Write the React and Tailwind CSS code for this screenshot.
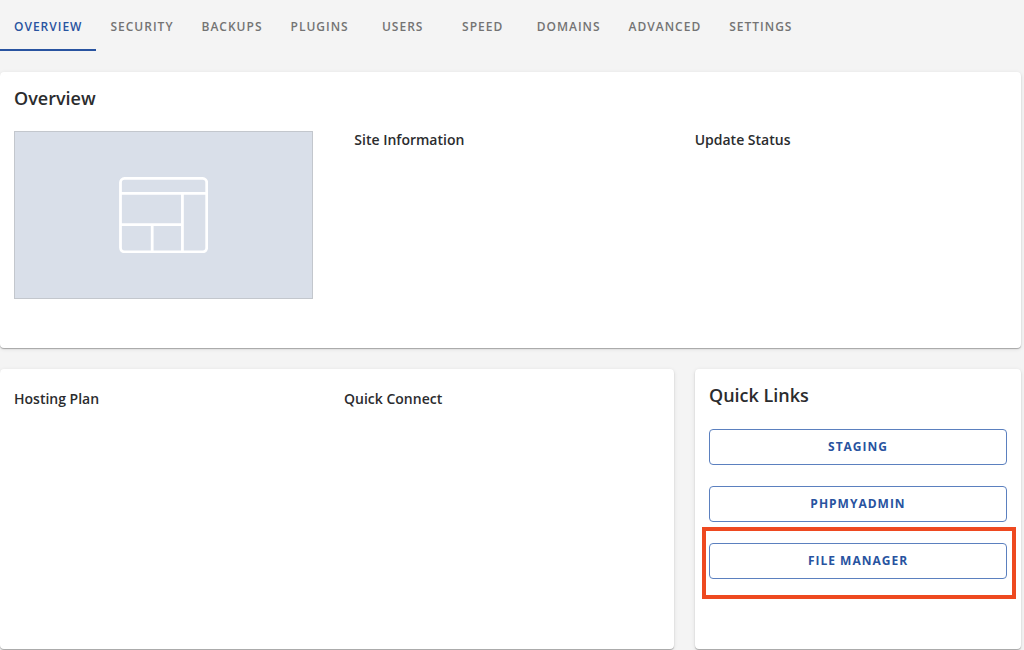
import React, { useState } from "react";

const tabs = [
  "Overview",
  "Security",
  "Backups",
  "Plugins",
  "Users",
  "Speed",
  "Domains",
  "Advanced",
  "Settings",
];

const quickLinks = [
  { label: "Staging" },
  { label: "phpMyAdmin" },
  { label: "File Manager", highlighted: true },
];

const Card = ({ className = "", children }) => (
  <section
    className={`rounded bg-white shadow-[0_1px_1px_rgba(0,0,0,0.28),0_1px_4px_rgba(0,0,0,0.1)] ${className}`}
  >
    {children}
  </section>
);

const SitePlaceholder = () => (
  <div className="flex aspect-[299/168] items-center justify-center border border-[#c3c7cd] bg-[#d9dfe9]">
    <svg
      className="w-[30%]"
      viewBox="0 0 90 77"
      fill="none"
      stroke="#fff"
      strokeWidth="2.8"
      aria-hidden="true"
    >
      <rect x="1.5" y="1.5" width="87" height="74" rx="4" />
      <path d="M1.5 16.5h87M64 16.5v59M1.5 48H64M33.5 48v27.5" />
    </svg>
  </div>
);

const App = () => {
  const [active, setActive] = useState("Overview");

  return (
    <div className="min-h-screen bg-[#f4f4f4] font-['Open_Sans',sans-serif] text-[#2b2c2e]">
      {/* Tabs */}
      <nav className="flex">
        {tabs.map((tab) => (
          <button
            key={tab}
            type="button"
            onClick={() => setActive(tab)}
            className={`min-w-20 border-b-2 px-3.5 pt-[17px] pb-3 text-xs leading-5 font-semibold tracking-[1px] uppercase ${
              active === tab
                ? "border-[#2853a0] text-[#2853a0]"
                : "border-transparent text-[#737373]"
            }`}
          >
            {tab}
          </button>
        ))}
      </nav>

      <main className="mt-[21px] mr-[3px] flex flex-col gap-[21px]">
        {/* Site overview */}
        <Card className="pt-3.5 pb-[49px]">
          <h1 className="px-3.5 text-lg leading-6 font-semibold">Overview</h1>
          <div className="mt-[21px] grid grid-cols-3">
            <div className="pr-[27px] pl-3.5">
              <SitePlaceholder />
            </div>
            <h2 className="px-3.5 text-sm leading-[18px] font-semibold">Site Information</h2>
            <h2 className="px-3.5 text-sm leading-[18px] font-semibold">Update Status</h2>
          </div>
        </Card>

        <div className="grid grid-cols-[674fr_326fr] gap-[21px]">
          <Card className="grid grid-cols-[330fr_344fr] pt-[21px]">
            <h2 className="px-3.5 text-sm leading-[18px] font-semibold">Hosting Plan</h2>
            <h2 className="px-3.5 text-sm leading-[18px] font-semibold">Quick Connect</h2>
          </Card>

          {/* Quick links */}
          <Card className="px-3.5 pt-3.5 pb-[70px]">
            <h2 className="text-lg leading-6 font-semibold">Quick Links</h2>
            <ul className="mt-[22px] flex flex-col gap-[21px]">
              {quickLinks.map((link) => (
                <li key={link.label} className="relative">
                  <button
                    type="button"
                    className="block w-full rounded border border-[#5b80bf] py-2 text-xs leading-[18px] font-bold tracking-[1px] text-[#2853a0] uppercase"
                  >
                    {link.label}
                  </button>
                  {link.highlighted && (
                    <span className="pointer-events-none absolute -top-4 -right-[9px] -bottom-5 -left-[7px] border-4 border-[#ee4920]" />
                  )}
                </li>
              ))}
            </ul>
          </Card>
        </div>
      </main>
    </div>
  );
};

export default App;
